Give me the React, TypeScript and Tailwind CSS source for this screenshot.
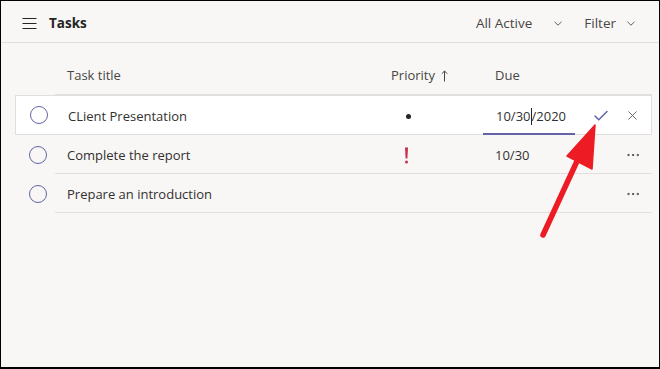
import { Check, X, MoreHorizontal } from "lucide-react";

const font = { fontFamily: '"Segoe UI", "Open Sans", "Noto Sans", sans-serif' };

function Circle() {
  return (
    <div className="w-[40px] flex-none pl-[14px] flex items-center">
      <div className="w-[18px] h-[18px] rounded-full border border-[#6264a7]" />
    </div>
  );
}

function Chevron({ className }: { className?: string }) {
  return (
    <svg className={className} width="8" height="5" viewBox="0 0 8 5" fill="none">
      <path d="M0.5 0.8L4 4.2L7.5 0.8" stroke="#605e5c" strokeWidth="1" />
    </svg>
  );
}

export default function App() {
  return (
    <div
      className="relative w-[660px] h-[369px] bg-[#f8f7f6] border-t border-l border-r border-b-2 border-black text-[13px] text-[#323130] overflow-hidden"
      style={font}
    >
      {/* Header */}
      <div className="h-[42px] flex items-center border-b border-[#e1dfdd] pl-[21px] pr-[24px] pt-[4px]">
        <svg width="15" height="11" viewBox="0 0 15 11" fill="none">
          <path d="M0.5 0.5H14.5M0.5 5.5H14.5M0.5 10.5H14.5" stroke="#252423" strokeWidth="1" />
        </svg>
        <span className="ml-[12px] font-bold text-[13.5px] text-[#252423]">Tasks</span>
        <div className="ml-auto flex items-center text-[#484644] text-[13.5px]">
          <span>All Active</span>
          <Chevron className="ml-[22px]" />
          <span className="ml-[22px]">Filter</span>
          <Chevron className="ml-[11px]" />
        </div>
      </div>

      <div className="pl-[14px] pr-[7px]">
        {/* Column headers */}
        <div className="mt-[11px] h-[41px] flex">
          <div className="w-[40px] flex-none" />
          <div className="flex-1 flex items-center border-b border-[#e1dfdd] text-[#484644] pt-[4px]">
            <div className="w-[336px] pl-[12px]">Task title</div>
            <div className="w-[104px] flex items-center">
              Priority
              <svg className="ml-[6px]" width="7" height="12" viewBox="0 0 7 12" fill="none">
                <path d="M3.5 11.5V1M0.8 3.7L3.5 1L6.2 3.7" stroke="#484644" strokeWidth="1" />
              </svg>
            </div>
            <div>Due</div>
          </div>
        </div>

        {/* Editing row */}
        <div className="h-[40px] flex bg-white border border-[#e1dfdd]">
          <Circle />
          <div className="flex-1 flex items-center">
            <div className="w-[336px] pl-[12px] pt-[4px]">CLient Presentation</div>
            <div className="w-[91px] pl-[14px] pt-[2px]">
              <div className="w-[5px] h-[5px] rounded-full bg-[#252423]" />
            </div>
            <div className="w-[92px] h-full flex items-center border-b-2 border-[#6264a7] pl-[13px] pt-[4px] mt-[1px]">
              <span>10/30</span>
              <span className="w-px h-[17px] bg-[#252423]" />
              <span>/2020</span>
            </div>
            <Check className="ml-[17px] mt-[1px] w-[18px] h-[18px] text-[#6264a7]" strokeWidth={2} />
            <X className="ml-[15px] mt-[1px] w-[15px] h-[15px] text-[#484644]" strokeWidth={1.25} />
          </div>
        </div>

        {/* Row 2 */}
        <div className="h-[39px] flex">
          <Circle />
          <div className="flex-1 flex items-center border-b border-[#e1dfdd]">
            <div className="w-[336px] pl-[12px] pt-[4px]">Complete the report</div>
            <div className="w-[104px] pl-[13px] pt-[2px] flex">
              <svg width="5" height="17" viewBox="0 0 5 17">
                <path d="M1 0.5h3l-0.6 11h-1.8z" fill="#c4314b" />
                <circle cx="2.5" cy="15" r="1.5" fill="#c4314b" />
              </svg>
            </div>
            <div className="w-[105px] pt-[4px]">10/30</div>
            <MoreHorizontal className="ml-[25px] mt-[2px] w-[16px] h-[16px] text-[#484644]" strokeWidth={1.5} />
          </div>
        </div>

        {/* Row 3 */}
        <div className="h-[39px] flex">
          <Circle />
          <div className="flex-1 flex items-center border-b border-[#e1dfdd]">
            <div className="w-[336px] pl-[12px] pt-[4px]">Prepare an introduction</div>
            <div className="w-[104px]" />
            <div className="w-[105px]" />
            <MoreHorizontal className="ml-[25px] mt-[2px] w-[16px] h-[16px] text-[#484644]" strokeWidth={1.5} />
          </div>
        </div>
      </div>

      {/* Red annotation arrow */}
      <svg className="absolute left-0 top-0" width="660" height="369" viewBox="0 0 660 369">
        <line x1="542" y1="234" x2="577" y2="158" stroke="#ed1c24" strokeWidth="5.5" strokeLinecap="round" />
        <polygon points="594,124 591,168 566,155" fill="#ed1c24" stroke="#ed1c24" strokeWidth="1.5" strokeLinejoin="round" />
      </svg>
    </div>
  );
}
